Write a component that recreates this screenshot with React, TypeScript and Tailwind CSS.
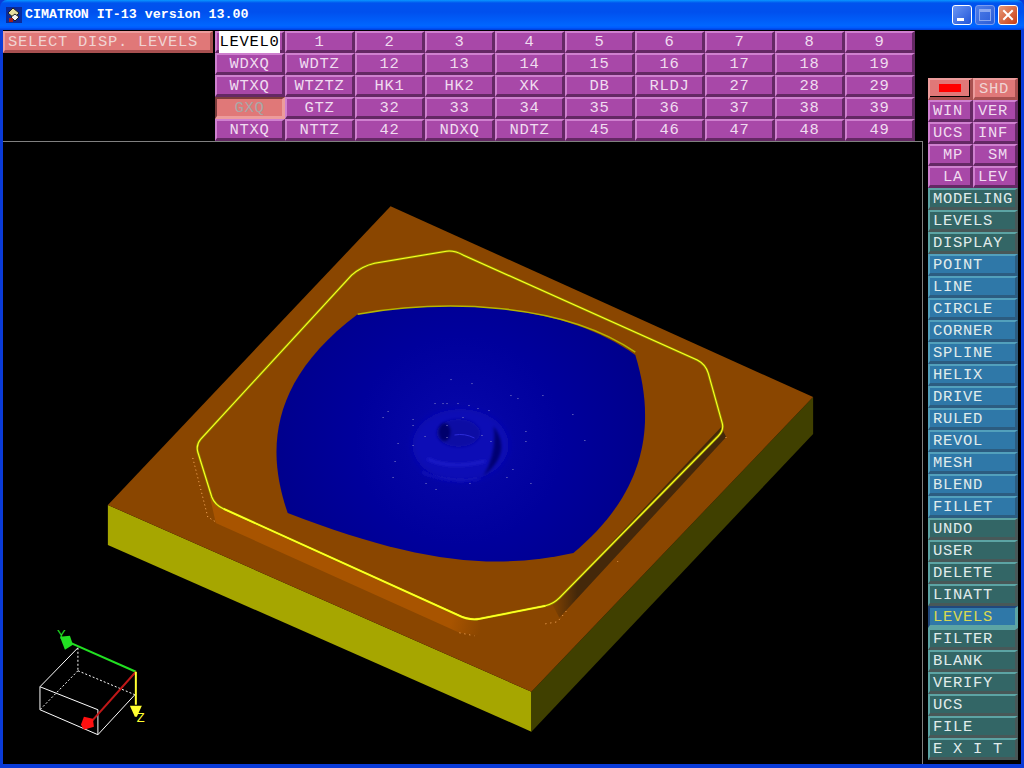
import React from "react";

const topRows = [
  ["LEVEL0", "1", "2", "3", "4", "5", "6", "7", "8", "9"],
  ["WDXQ", "WDTZ", "12", "13", "14", "15", "16", "17", "18", "19"],
  ["WTXQ", "WTZTZ", "HK1", "HK2", "XK", "DB", "RLDJ", "27", "28", "29"],
  ["GXQ", "GTZ", "32", "33", "34", "35", "36", "37", "38", "39"],
  ["NTXQ", "NTTZ", "42", "NDXQ", "NDTZ", "45", "46", "47", "48", "49"],
];

const sideRows = [
  ["WIN", "VER"],
  ["UCS", "INF"],
  [" MP", " SM"],
  [" LA", "LEV"],
];

const menu = [
  { label: "MODELING", kind: "teal" },
  { label: "LEVELS", kind: "teal" },
  { label: "DISPLAY", kind: "teal" },
  { label: "POINT", kind: "blue" },
  { label: "LINE", kind: "blue" },
  { label: "CIRCLE", kind: "blue" },
  { label: "CORNER", kind: "blue" },
  { label: "SPLINE", kind: "blue" },
  { label: "HELIX", kind: "blue" },
  { label: "DRIVE", kind: "blue" },
  { label: "RULED", kind: "blue" },
  { label: "REVOL", kind: "blue" },
  { label: "MESH", kind: "blue" },
  { label: "BLEND", kind: "blue" },
  { label: "FILLET", kind: "blue" },
  { label: "UNDO", kind: "teal" },
  { label: "USER", kind: "teal" },
  { label: "DELETE", kind: "teal" },
  { label: "LINATT", kind: "teal" },
  { label: "LEVELS", kind: "active" },
  { label: "FILTER", kind: "teal" },
  { label: "BLANK", kind: "teal" },
  { label: "VERIFY", kind: "teal" },
  { label: "UCS", kind: "teal" },
  { label: "FILE", kind: "teal" },
  { label: "E X I T", kind: "teal" },
];

const kinds: Record<string, string> = {
  purple: "bg-[#a848a8] border-t-[#cf80cf] border-l-[#cf80cf] border-b-[#642864] border-r-[#642864] text-[#f0dcf0]",
  salmon: "bg-[#e07878] border-t-[#ec9c9c] border-l-[#ec9c9c] border-b-[#a85050] border-r-[#a85050] text-[#f0d4d4]",
  pressed: "bg-[#e07878] border-t-[#7c3c3c] border-l-[#7c3c3c] border-b-[#ec9c9c] border-r-[#ec9c9c] text-[#a8a8a8]",
  teal: "bg-[#336666] border-t-[#5ca4a4] border-l-[#5ca4a4] border-b-[#485858] border-r-[#485858] text-[#e0ecec]",
  blue: "bg-[#2f78a8] border-t-[#52a0bc] border-l-[#52a0bc] border-b-[#2c5c80] border-r-[#2c5c80] text-[#e0ecec]",
  active: "bg-[#2f78a8] border-t-[#20487c] border-l-[#20487c] border-b-[#5ca4a4] border-r-[#5ca4a4] text-[#d8d850]",
};

const Btn = ({ kind, className, children }: { kind: string; className?: string; children?: React.ReactNode }) => (
  <div
    className={`flex h-[22px] items-center whitespace-pre border-2 border-b-[3px] border-r-[3px] pt-[2px] font-['Liberation_Mono',monospace] text-[15.5px] tracking-[0.7px] ${kinds[kind]} ${className ?? ""}`}
  >
    {children}
  </div>
);

const specks = [
  [451, 379], [472, 383], [511, 395], [518, 398], [388, 411], [383, 417], [435, 403], [443, 403],
  [447, 403], [458, 403], [469, 405], [478, 408], [489, 410], [413, 419], [413, 425], [398, 443],
  [413, 445], [393, 477], [426, 483], [436, 489], [470, 483], [507, 477], [513, 469], [531, 483],
  [526, 431], [526, 441], [491, 441], [482, 435], [447, 425], [463, 417], [425, 436], [447, 437],
  [573, 414], [585, 440], [543, 395], [395, 461],
];

const outline =
  "M375 263 L447 251 Q455 250 464 255 L698 360 Q706 364 709 373 L723 423 Q725 430 719 436 L560 598 Q554 604 546 606 L480 619 Q470 621 458 615 L224 509 Q215 505 212 497 L198 452 Q196 445 201 439 L352 275 Q362 266 375 263 Z";

const PartView = () => (
  <svg viewBox="3 142 920 622" className="block h-full w-full">
    <defs>
      <linearGradient id="wall" gradientUnits="userSpaceOnUse" x1="550" y1="610" x2="578" y2="610">
        <stop offset="0" stopColor="#8a4600" />
        <stop offset="1" stopColor="#44280a" />
      </linearGradient>
      <linearGradient id="band" gradientUnits="userSpaceOnUse" x1="452" y1="620" x2="482" y2="628">
        <stop offset="0" stopColor="#a85400" />
        <stop offset="1" stopColor="#8a4600" />
      </linearGradient>
      <radialGradient id="dish" gradientUnits="userSpaceOnUse" cx="460" cy="440" r="190">
        <stop offset="0" stopColor="#0808ac" />
        <stop offset="0.55" stopColor="#00009c" />
        <stop offset="1" stopColor="#00008c" />
      </radialGradient>
      <filter id="soft" x="-40%" y="-40%" width="180%" height="180%">
        <feGaussianBlur stdDeviation="3" />
      </filter>
      <filter id="softer" x="-40%" y="-40%" width="180%" height="180%">
        <feGaussianBlur stdDeviation="1.5" />
      </filter>
    </defs>

    <polygon points="108,505 532,692 532,732 108,545" fill="#a6a600" />
    <polygon points="532,692 814,397 814,434 532,732" fill="#404000" />
    <polygon points="391,206 814,397 532,692 108,505" fill="#8a4600" />

    {/* pocket walls */}
    <polygon points="210,496 222,508 460,617 480,619 482,636 460,633 216,523" fill="url(#band)" />
    <polygon points="553,605 722,427 727,437 560,618" fill="url(#wall)" />
    <path d="M193 458 L208 517 L216 522" fill="none" stroke="#ffb060" strokeWidth="1" strokeDasharray="1 3" />
    <path d="M460 633 L475 636 M546 624 L558 622 L568 610 M618 562 L620 560 M727 437 L725 441" fill="none" stroke="#ffb060" strokeWidth="1" strokeDasharray="1 4" />

    {/* blue surface */}
    <path
      d="M358 314 C 440 300 560 300 636 355 C 656 420 650 490 574 553 C 490 572 410 560 288 513 C 266 450 270 380 358 314 Z"
      fill="url(#dish)"
    />
    <path d="M358 314 C 440 300 560 300 636 352" fill="none" stroke="#b4b400" strokeWidth="1.5" />

    {/* centre boss */}
    <ellipse cx="461" cy="445" rx="48" ry="36" fill="#0c0cb6" filter="url(#soft)" />
    <path d="M494 426 Q 514 452 484 476 Q 498 452 494 426 Z" fill="#000072" filter="url(#softer)" />
    <path d="M428 459 Q 452 470 486 461" fill="none" stroke="#2222d0" strokeWidth="2" filter="url(#softer)" />
    <path d="M422 472 Q 446 484 480 479" fill="none" stroke="#1414bc" strokeWidth="2" filter="url(#softer)" />
    <ellipse cx="459" cy="433" rx="22" ry="14" fill="#0808a4" filter="url(#softer)" />
    <ellipse cx="445" cy="432" rx="6" ry="9" fill="#00006c" filter="url(#softer)" />
    <path d="M455 435 Q 465 433 475 438" fill="none" stroke="#2c2cd8" strokeWidth="1" />
    {specks.map(([x, y]) => (
      <rect key={`${x}-${y}`} x={x} y={y} width="1" height="1" fill="#8c8cc8" />
    ))}

    {/* pocket outline */}
    <path d={outline} fill="none" stroke="#8c8c00" strokeWidth="2.6" />
    <path d={outline} fill="none" stroke="#ffff20" strokeWidth="1.1" />
    <path d="M224 509 L458 615 Q470 621 480 619 L546 606" fill="none" stroke="#ffff20" strokeWidth="1.8" />

    {/* axis triad */}
    <g stroke="#ffffff" strokeWidth="1" fill="none">
      <path d="M78 648 L40 687 L98 710 L98 735 L40 710 L40 687 M98 735 L135 695" />
      <path d="M78 648 L78 671 M78 671 L40 710 M78 671 L135 695" strokeDasharray="2 2" />
    </g>
    <path d="M136 672 L66 641" stroke="#22e022" strokeWidth="2" />
    <path d="M60 637 L70 636 L73 645 L65 650 Z" fill="#22e022" />
    <text x="57" y="639" fontSize="13" fill="#22e022" fontFamily="'Liberation Sans', sans-serif">Y</text>
    <path d="M136 672 L87 727" stroke="#c01818" strokeWidth="2" />
    <path d="M84 717 L93 719 L94 727 L84 730 L81 725 Z" fill="#ff1010" />
    <path d="M136 672 L136 705" stroke="#ffff30" strokeWidth="2" />
    <path d="M130 706 L142 706 L137 717 L135 717 Z" fill="#ffff30" />
    <text x="137" y="722" fontSize="13" fill="#ffff30" fontFamily="'Liberation Sans', sans-serif">Z</text>
  </svg>
);

const TitleBar = () => (
  <div className="flex h-[30px] shrink-0 items-center rounded-t-[7px] bg-[linear-gradient(180deg,#0997ff_0,#0053ee_10%,#0050ee_40%,#0066ff_85%,#005bff_92%,#003dd7_100%)] pl-[6px] pr-[6px]">
    <svg width="16" height="16" viewBox="0 0 16 16" className="shrink-0">
      <rect x="0" y="0" width="16" height="16" fill="#0a2a9c" />
      <path d="M2 6 L7 1 L13 6 L8 11 Z" fill="#e8e0a0" stroke="#202020" strokeWidth="1" />
      <path d="M5 10 L9 14 L13 10 L9 7 Z" fill="#f4f4f4" stroke="#202020" strokeWidth="1" />
      <rect x="3" y="11" width="4" height="4" fill="#a02020" />
    </svg>
    <span className="ml-[3px] flex-1 whitespace-pre font-['Liberation_Mono',monospace] text-[13.3px] font-bold text-white">
      CIMATRON IT-13 version 13.00
    </span>
    <div className="flex items-center gap-[3px]">
      <div className="relative h-[20px] w-[20px] rounded-[3px] border border-white bg-[linear-gradient(135deg,#6a96f4,#2255d8)]">
        <div className="absolute bottom-[3px] left-[4px] h-[3px] w-[7px] bg-white" />
      </div>
      <div className="relative h-[20px] w-[20px] rounded-[3px] border border-[#7a9cf0] bg-[linear-gradient(135deg,#4f7ee8,#2a5cd8)]">
        <div className="absolute left-[3px] top-[3px] h-[12px] w-[12px] border border-t-[3px] border-[#8aa8f0]" />
      </div>
      <div className="flex h-[20px] w-[20px] items-center justify-center rounded-[3px] border border-white bg-[linear-gradient(135deg,#e89a78,#c83c14)]">
        <svg width="12" height="12" viewBox="0 0 12 12">
          <path d="M2 2 L10 10 M10 2 L2 10" stroke="#ffffff" strokeWidth="2" strokeLinecap="square" />
        </svg>
      </div>
    </div>
  </div>
);

export default function App() {
  return (
    <div className="flex h-[768px] w-[1024px] flex-col overflow-hidden bg-[#0a3bd8]">
      <TitleBar />
      <div className="mx-[3px] mb-[4px] flex flex-1 bg-black">
        <div className="flex w-[920px] flex-col">
          <div className="flex h-[111px] shrink-0 pt-px">
            <Btn kind="salmon" className="w-[210px] pl-[3px] text-[#eccaca]">SELECT DISP. LEVELS</Btn>
            <div className="ml-[2px] grid w-[700px] grid-cols-10 content-start">
              {topRows.flat().map((label) => {
                if (label === "LEVEL0") {
                  return (
                    <Btn key={label} kind="purple" className="justify-center">
                      <span className="bg-white text-black">LEVEL0</span>
                    </Btn>
                  );
                }
                return (
                  <Btn key={label} kind={label === "GXQ" ? "pressed" : "purple"} className="justify-center">
                    {label}
                  </Btn>
                );
              })}
            </div>
          </div>
          <div className="min-h-0 flex-1 border-r border-t border-[#808080]">
            <PartView />
          </div>
        </div>
        <div className="ml-[5px] w-[90px] pt-[48px]">
          <div className="grid grid-cols-2">
            <Btn kind="salmon" className="!pt-0">
              <div className="flex h-full w-full items-center justify-center border-b border-r border-black">
                <div className="h-[8px] w-[22px] bg-[#ff0000]" />
              </div>
            </Btn>
            <Btn kind="salmon" className="pl-[4px]">SHD</Btn>
            {sideRows.flat().map((label) => (
              <Btn key={label} kind="purple" className="pl-[3px]">{label}</Btn>
            ))}
          </div>
          {menu.map((item, i) => (
            <Btn key={i} kind={item.kind} className="pl-[3px]">{item.label}</Btn>
          ))}
        </div>
      </div>
    </div>
  );
}
